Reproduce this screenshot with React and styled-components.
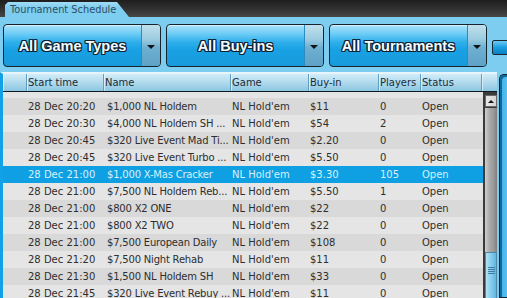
import styled, { createGlobalStyle } from "styled-components";

const GlobalStyle = createGlobalStyle`
  html, body { margin: 0; padding: 0; background: #7ccdf0; }
  body { font-family: "DejaVu Sans", sans-serif; }
`;

const COLS = "24px 77px 127px 78px 70px 42px 61px";

const rows = [
  ["28 Dec 20:20", "$1,000 NL Holdem", "NL Hold'em", "$11", "0", "Open"],
  ["28 Dec 20:30", "$4,000 NL Holdem SH ...", "NL Hold'em", "$54", "2", "Open"],
  ["28 Dec 20:45", "$320 Live Event Mad Ti...", "NL Hold'em", "$2.20", "0", "Open"],
  ["28 Dec 20:45", "$320 Live Event Turbo ...", "NL Hold'em", "$5.50", "0", "Open"],
  ["28 Dec 21:00", "$1,000 X-Mas Cracker", "NL Hold'em", "$3.30", "105", "Open"],
  ["28 Dec 21:00", "$7,500 NL Holdem Reb...", "NL Hold'em", "$5.50", "1", "Open"],
  ["28 Dec 21:00", "$800 X2 ONE", "NL Hold'em", "$22", "0", "Open"],
  ["28 Dec 21:00", "$800 X2 TWO", "NL Hold'em", "$22", "0", "Open"],
  ["28 Dec 21:00", "$7,500 European Daily", "NL Hold'em", "$108", "0", "Open"],
  ["28 Dec 21:20", "$7,500 Night Rehab", "NL Hold'em", "$11", "0", "Open"],
  ["28 Dec 21:30", "$1,500 NL Holdem SH", "NL Hold'em", "$33", "0", "Open"],
  ["28 Dec 21:45", "$320 Live Event Rebuy ...", "NL Hold'em", "$11", "0", "Open"],
];

const SELECTED = 4;

const App = () => {
  return (
    <Page>
      <GlobalStyle />
      <TabBar>
        <Tab>Tournament Schedule</Tab>
      </TabBar>
      <FilterBar>
        <Dropdown>
          <DropLabel>All Game Types</DropLabel>
          <DropArrow />
        </Dropdown>
        <Dropdown>
          <DropLabel>All Buy-ins</DropLabel>
          <DropArrow />
        </Dropdown>
        <Dropdown>
          <DropLabel>All Tournaments</DropLabel>
          <DropArrow />
        </Dropdown>
        <MiniButton />
      </FilterBar>
      <TableArea>
        <TableFrame>
          <HeaderRow>
            <HeadCell />
            <HeadCell>Start time</HeadCell>
            <HeadCell>Name</HeadCell>
            <HeadCell>Game</HeadCell>
            <HeadCell>Buy-in</HeadCell>
            <HeadCell>Players</HeadCell>
            <HeadCell>Status</HeadCell>
            <HeadCell />
          </HeaderRow>
          <BodyWrap>
            <RowList>
              <PartialRow />
              {rows.map((r, i) => (
                <Row key={i} $alt={i % 2 === 0} $selected={i === SELECTED}>
                  <Cell />
                  <Cell>{r[0]}</Cell>
                  <Cell $pad={3} $tight>{r[1]}</Cell>
                  <Cell>{r[2]}</Cell>
                  <Cell>{r[3]}</Cell>
                  <Cell>{r[4]}</Cell>
                  <Cell>{r[5]}</Cell>
                </Row>
              ))}
            </RowList>
            <Scrollbar>
              <ScrollUp />
              <ScrollTrack>
                <ScrollThumb>
                  <Grip />
                </ScrollThumb>
              </ScrollTrack>
            </Scrollbar>
          </BodyWrap>
        </TableFrame>
        <SidePanel />
      </TableArea>
    </Page>
  );
};

export default App;

const Page = styled.div`
  width: 507px;
  height: 298px;
  overflow: hidden;
  background: #7ccdf0;
  display: flex;
  flex-direction: column;
`;

const TabBar = styled.div`
  height: 17px;
  flex-shrink: 0;
  background: linear-gradient(#1e1e1e, #2c2c2c 40%, #474747);
  display: flex;
  align-items: flex-end;
  padding-left: 5px;
`;

const Tab = styled.div`
  width: 124px;
  height: 15px;
  background: linear-gradient(#a4ddf5, #7ccdf0 40%);
  clip-path: polygon(0 100%, 0 3px, 3px 0, 112px 0, 100% 100%);
  color: #2f4f60;
  font-size: 9.8px;
  line-height: 16px;
  padding-left: 5px;
  box-sizing: border-box;
  white-space: nowrap;
`;

const FilterBar = styled.div`
  display: flex;
  align-items: center;
  gap: 5px;
  padding: 7px 0 0 3px;
  height: 43px;
  flex-shrink: 0;
`;

const Dropdown = styled.div`
  width: 158px;
  height: 43px;
  box-sizing: border-box;
  flex-shrink: 0;
  border: 1px solid #16222c;
  border-radius: 4px;
  display: flex;
  overflow: hidden;
  background:
    radial-gradient(rgba(255, 255, 255, 0.12) 0.6px, transparent 0.8px) 0 0 / 2px 2px,
    linear-gradient(#a6e2fa 0%, #62c8f4 22%, #22aaea 42%, #0c9ce2 60%, #0a94da 100%);
  box-shadow: inset 0 1px 0 rgba(255, 255, 255, 0.5);
`;

const DropLabel = styled.div`
  flex: 1;
  display: flex;
  align-items: center;
  justify-content: center;
  font-family: "Liberation Sans", Arial, sans-serif;
  font-weight: bold;
  font-size: 14.5px;
  color: #f4fbff;
  text-shadow:
    1px 0 0 #0b2436, -1px 0 0 #0b2436, 0 1px 0 #0b2436, 0 -1px 0 #0b2436,
    1px 1px 0 #0b2436, -1px -1px 0 #0b2436, 1px -1px 0 #0b2436, -1px 1px 0 #0b2436;
  padding-top: 1px;
`;

const DropArrow = styled.div`
  width: 18px;
  flex-shrink: 0;
  border-left: 1px solid #2a8cc0;
  background: linear-gradient(#c0e0ec, #9ccbe0 35%, #6fb0d2 55%, #5ea2c6);
  display: flex;
  align-items: center;
  justify-content: center;

  &::after {
    content: "";
    border-left: 4px solid transparent;
    border-right: 4px solid transparent;
    border-top: 4px solid #101418;
    margin-top: 2px;
  }
`;

const MiniButton = styled.div`
  width: 17px;
  height: 15px;
  flex-shrink: 0;
  box-sizing: border-box;
  border: 1px solid #1a2630;
  border-radius: 2px;
  background: linear-gradient(#6ccaf2, #1a9ee2 50%, #0a80c0);
  margin-top: 4px;
`;

const TableArea = styled.div`
  flex: 1;
  display: flex;
  margin-top: 5px;
  min-height: 0;
`;

const TableFrame = styled.div`
  width: 497px;
  flex-shrink: 0;
  box-sizing: border-box;
  border-left: 3px solid #12a0e6;
  border-top: 2px solid #e6f5fc;
  display: flex;
  flex-direction: column;
  min-height: 0;
`;

const HeaderRow = styled.div`
  display: grid;
  grid-template-columns: ${COLS} 1fr;
  height: 17px;
  flex-shrink: 0;
  border-bottom: 1px solid #101820;
  background: linear-gradient(#d2ecf8, #b4dcee 45%, #8cc6e2);
`;

const HeadCell = styled.div`
  font-size: 10px;
  line-height: 17px;
  color: #1c2c38;
  padding-left: 1px;
  white-space: nowrap;
  overflow: hidden;
  border-right: 1px solid #5f9fc2;
  box-shadow: inset 1px 0 0 rgba(255, 255, 255, 0.55);

  &:last-child {
    border-right: none;
  }
`;

const BodyWrap = styled.div`
  flex: 1;
  display: flex;
  min-height: 0;
  overflow: hidden;
`;

const RowList = styled.div`
  width: 480px;
  flex-shrink: 0;
  background: #e5e5e5;
`;

const PartialRow = styled.div`
  height: 6px;
  background: #e5e5e5;
`;

const Row = styled.div`
  display: grid;
  grid-template-columns: ${COLS};
  height: 17px;
  background: ${(p) => (p.$selected ? "#0ea0e2" : p.$alt ? "#d9d9d9" : "#e5e5e5")};
  color: ${(p) => (p.$selected ? "#d8f1fd" : "#2e2e2e")};
`;

const Cell = styled.div`
  font-size: 10px;
  line-height: 17px;
  padding-left: ${(p) => p.$pad ?? 1}px;
  letter-spacing: ${(p) => (p.$tight ? "-0.2px" : "0")};
  white-space: nowrap;
  overflow: hidden;
`;

const Scrollbar = styled.div`
  width: 14px;
  flex-shrink: 0;
  display: flex;
  flex-direction: column;
  border-left: 1px solid #3a3a3a;
  background: #3a3a3a;
`;

const ScrollUp = styled.div`
  height: 12px;
  margin: 3px 1px 1px 1px;
  background: linear-gradient(90deg, #e8e8e8, #d4d4d4);
  border: 1px solid #6a6a6a;
  box-sizing: border-box;
  display: flex;
  align-items: center;
  justify-content: center;

  &::after {
    content: "";
    border-left: 3px solid transparent;
    border-right: 3px solid transparent;
    border-bottom: 3px solid #111;
  }
`;

const ScrollTrack = styled.div`
  flex: 1;
  margin: 0 1px;
  background: linear-gradient(90deg, #cfcfcf, #a8a8a8 40%, #9a9a9a 70%, #808080);
  display: flex;
  flex-direction: column;
  justify-content: flex-end;
`;

const ScrollThumb = styled.div`
  height: 52px;
  margin-bottom: -6px;
  box-sizing: border-box;
  border: 1px solid #4e88a8;
  background: linear-gradient(90deg, #b4e2f6, #86cdee 50%, #5fb6e0);
  display: flex;
  justify-content: center;
  padding-top: 14px;
`;

const Grip = styled.div`
  width: 7px;
  height: 7px;
  background: repeating-linear-gradient(#3f7ea0 0 1px, transparent 1px 2px);
`;

const SidePanel = styled.div`
  flex: 1;
  margin-left: 2px;
  margin-top: 2px;
  border: 1px solid #14232e;
  border-right: none;
  border-radius: 5px 0 0 0;
  background: linear-gradient(90deg, #3cb0e8, #58c0f0);
  box-shadow: inset 2px 2px 0 #0f6a9c;
`;
